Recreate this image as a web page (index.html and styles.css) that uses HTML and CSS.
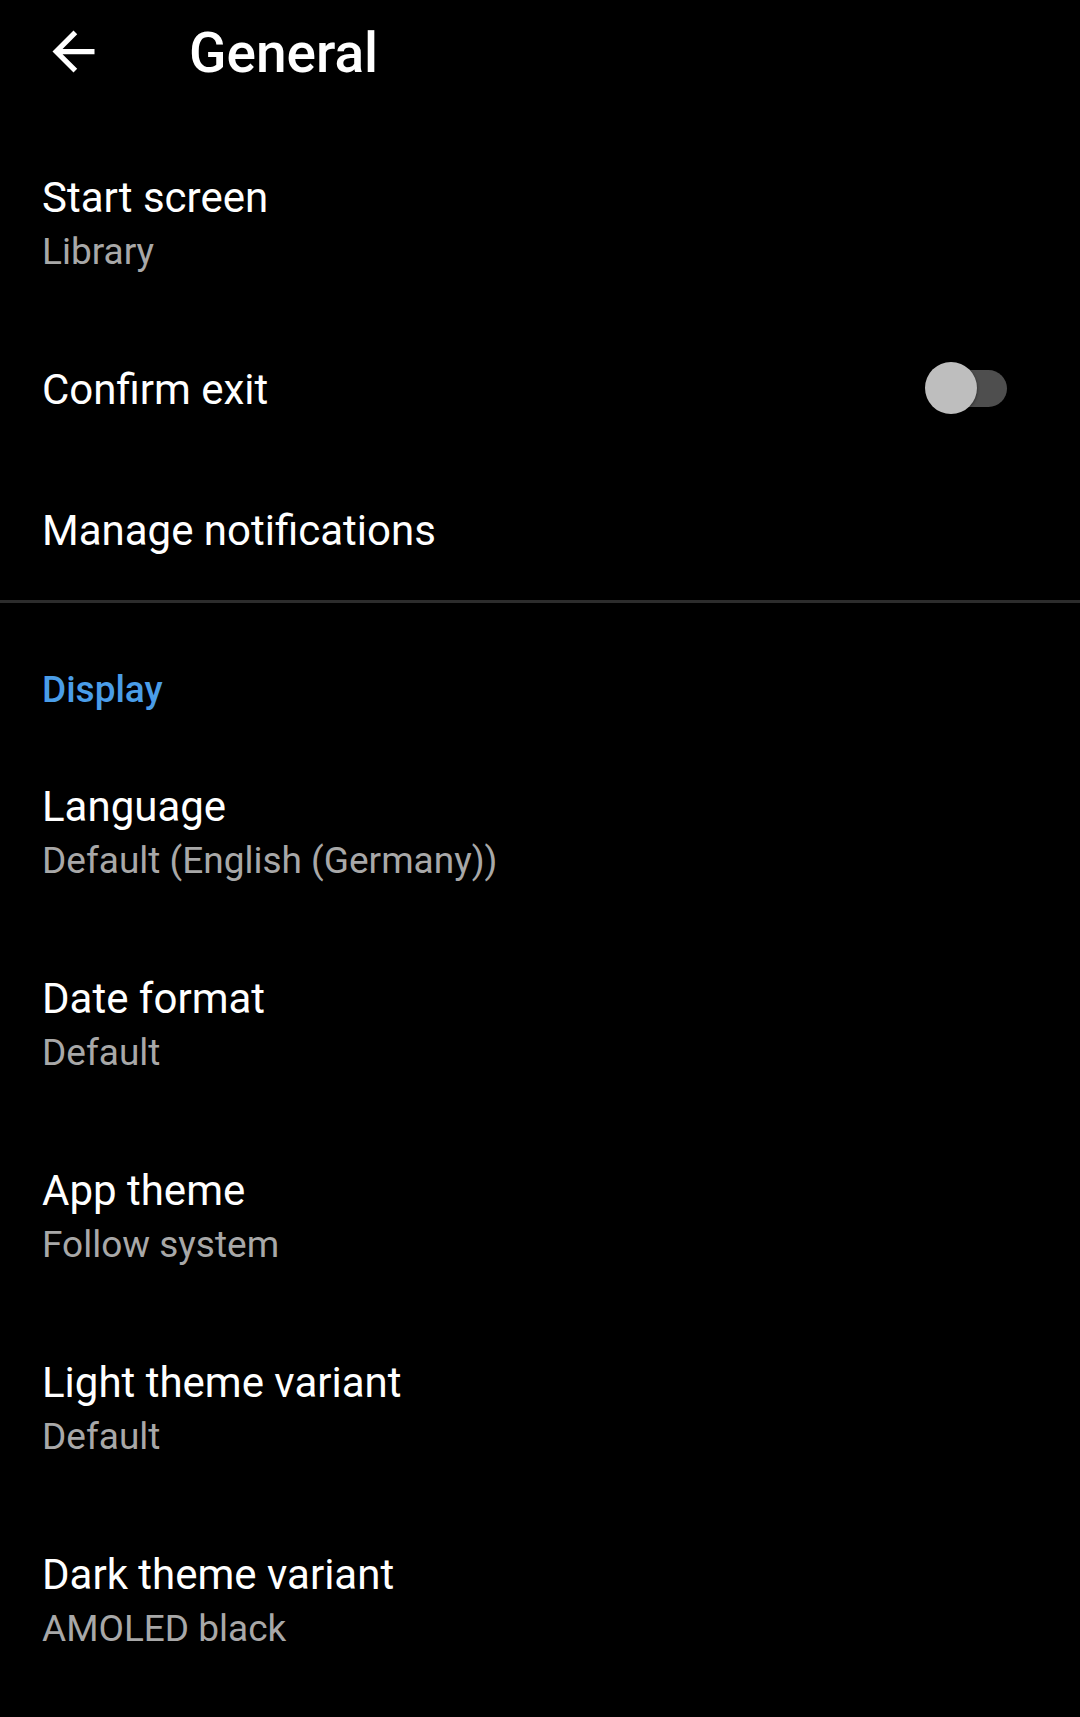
FILE: index.html
```html
<!DOCTYPE html>
<html lang="en">
<head>
  <meta charset="UTF-8">
  <meta name="viewport" content="width=device-width, initial-scale=1.0">
  <title>General</title>
  <link rel="stylesheet" href="styles.css">
</head>
<body>
  <div class="toolbar">
    <svg class="back" viewBox="0 0 24 24"><path d="M20 11H7.83l5.59-5.59L12 4l-8 8 8 8 1.41-1.41L7.83 13H20v-2z"/></svg>
    <div class="title">General</div>
  </div>
  <div class="list">
    <div class="pref">
      <div class="pref-title">Start screen</div>
      <div class="pref-summary">Library</div>
    </div>
    <div class="pref single switch-row">
      <div class="pref-title">Confirm exit</div>
      <div class="switch"></div>
    </div>
    <div class="pref single last">
      <div class="pref-title">Manage notifications</div>
    </div>
    <div class="divider"></div>
    <div class="category">Display</div>
    <div class="pref">
      <div class="pref-title">Language</div>
      <div class="pref-summary">Default (English (Germany))</div>
    </div>
    <div class="pref">
      <div class="pref-title">Date format</div>
      <div class="pref-summary">Default</div>
    </div>
    <div class="pref">
      <div class="pref-title">App theme</div>
      <div class="pref-summary">Follow system</div>
    </div>
    <div class="pref">
      <div class="pref-title">Light theme variant</div>
      <div class="pref-summary">Default</div>
    </div>
    <div class="pref">
      <div class="pref-title">Dark theme variant</div>
      <div class="pref-summary">AMOLED black</div>
    </div>
  </div>
</body>
</html>
```

FILE: styles.css
```css
body {
  font-family: Roboto, "Noto Sans", sans-serif;
  margin: 0;
  padding: 0;
  background-color: #000;
  color: #fff;
}
.toolbar {
  height: 103px;
  display: flex;
  align-items: center;
  padding-left: 42px;
}
.toolbar .back {
  width: 63px;
  height: 63px;
  fill: #fff;
  flex: none;
}
.toolbar .title {
  margin-left: 84px;
  font-size: 55px;
  font-weight: 500;
  line-height: 64px;
  padding-top: 3px;
}
.list {
  padding-top: 25px;
}
.pref {
  height: 192px;
  box-sizing: border-box;
  padding: 42px 73px 0 42px;
}
.pref-title {
  font-size: 42px;
  line-height: 56px;
  color: #fff;
}
.pref-summary {
  font-size: 37px;
  line-height: 52px;
  color: #a8a8a8;
}
.pref.single {
  height: 140px;
  padding-top: 0;
  display: flex;
  align-items: center;
  justify-content: space-between;
}
.pref.last {
  align-items: flex-start;
  padding-top: 43px;
}
.switch {
  position: relative;
  width: 75px;
  height: 37px;
  margin-bottom: 4px;
  border-radius: 19px;
  background-color: #4e4e4e;
}
.switch::after {
  content: "";
  position: absolute;
  left: -7px;
  top: -8px;
  width: 52px;
  height: 52px;
  border-radius: 50%;
  background-color: #bebebe;
  box-shadow: 0 1px 3px rgba(0, 0, 0, 0.5);
}
.divider {
  height: 3px;
  background-color: #2c2c2c;
}
.category {
  padding: 65px 42px 25px;
  font-size: 37px;
  font-weight: 500;
  line-height: 44px;
  color: #4a9de8;
}
```
